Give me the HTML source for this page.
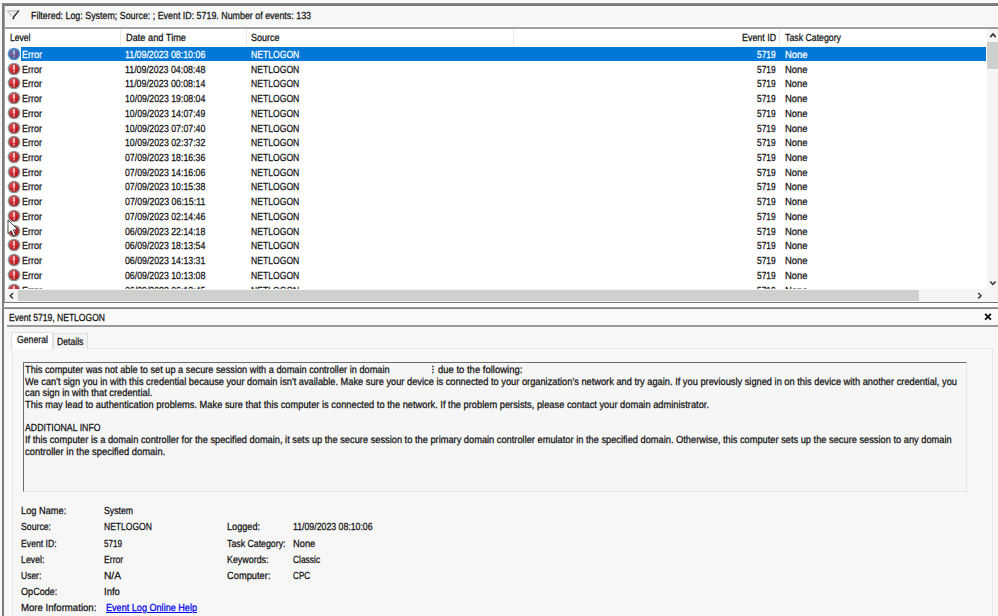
<!DOCTYPE html>
<html>
<head>
<meta charset="utf-8">
<title>Event Viewer</title>
<style>
html,body{margin:0;padding:0;}
body{width:998px;height:616px;overflow:hidden;background:#f7f7f7;font-family:"Liberation Sans",sans-serif;font-size:10.3px;color:#101010;position:relative;}
.abs{position:absolute;}
.t{position:absolute;white-space:nowrap;text-rendering:geometricPrecision;line-height:12px;height:12px;transform-origin:0 0;-webkit-text-stroke:0.25px currentColor;}
.w{color:#fff;}
.lnk{color:#0000f0;text-decoration:underline;}
#clip{position:absolute;left:0;top:0;width:998px;height:289.1px;overflow:hidden;}
</style>
</head>
<body>
<svg width="0" height="0" style="position:absolute"><defs><radialGradient id="gr" cx="0.35" cy="0.3" r="0.8"><stop offset="0" stop-color="#e4484d"/><stop offset="1" stop-color="#ad0c12"/></radialGradient><radialGradient id="gs" cx="0.35" cy="0.3" r="0.8"><stop offset="0" stop-color="#7a6a9c"/><stop offset="1" stop-color="#58467c"/></radialGradient></defs></svg>

<div class="abs" style="left:1.6px;top:3px;width:997px;height:2.8px;background:linear-gradient(#8e8e8e,#6c6c6c)"></div>
<div class="abs" style="left:1.6px;top:3px;width:2.2px;height:306px;background:#7b7b7b"></div>
<div class="abs" style="left:3.8px;top:5.2px;width:0.8px;height:304px;background:#a0a0a0"></div>
<div class="abs" style="left:0;top:0;width:998px;height:3px;background:#fafafa"></div>
<div class="abs" style="left:4.7px;top:5.8px;width:994px;height:21.2px;background:#f7f7f7;border-top:1.4px solid #fff;border-bottom:1.2px solid #fff;box-sizing:border-box"></div>
<div class="abs" style="left:4.5px;top:27px;width:994px;height:1.8px;background:#a0a0a0"></div>
<div class="abs" style="left:5px;top:28.7px;width:982px;height:261px;background:#fff"></div>
<div class="abs" style="left:119.9px;top:29px;width:1px;height:17px;background:#e8e8e8"></div>
<div class="abs" style="left:245.5px;top:29px;width:1px;height:17px;background:#e8e8e8"></div>
<div class="abs" style="left:513.2px;top:29px;width:1px;height:17px;background:#e8e8e8"></div>
<div class="abs" style="left:779.3px;top:29px;width:1px;height:17px;background:#e8e8e8"></div>
<div class="abs" style="left:987px;top:28.7px;width:11px;height:273px;background:#f5f5f5"></div>
<div class="abs" style="left:987px;top:41.8px;width:11px;height:27px;background:#cdd0cc"></div>
<svg class="abs" style="left:987px;top:30px" width="11" height="12" viewBox="0 0 11 12"><path d="M3.3 7.1 L6 4.0 L8.7 7.1" fill="none" stroke="#303030" stroke-width="1.6"/></svg>
<svg class="abs" style="left:987px;top:276.5px" width="11" height="12" viewBox="0 0 11 12"><path d="M3.2 4.5 L5.9 7.4 L8.6 4.5" fill="none" stroke="#303030" stroke-width="1.5"/></svg>
<div id="clip">
<div class="abs" style="left:20.8px;top:46.60px;width:965.6px;height:14.8px;background:#0078d7"></div>
<svg class="abs" style="left:7.35px;top:46.95px" width="14" height="14" viewBox="0 0 14 14"><circle cx="7" cy="7" r="6.35" fill="#4a98dc"/><circle cx="7" cy="7" r="4.85" fill="url(#gs)"/><path d="M6.2 3.2 L7.8 3.2 L7.55 8.2 L6.45 8.2 Z" fill="#a8e0ff"/><rect x="6.35" y="9" width="1.3" height="1.4" rx="0.4" fill="#a8e0ff"/></svg>
<svg class="abs" style="left:7.35px;top:61.68px" width="14" height="14" viewBox="0 0 14 14"><circle cx="7" cy="7" r="6.35" fill="#8f9494"/><circle cx="7" cy="7" r="4.85" fill="url(#gr)"/><path d="M6.2 3.2 L7.8 3.2 L7.55 8.2 L6.45 8.2 Z" fill="#ffffff"/><rect x="6.35" y="9" width="1.3" height="1.4" rx="0.4" fill="#ffffff"/></svg>
<svg class="abs" style="left:7.35px;top:76.41px" width="14" height="14" viewBox="0 0 14 14"><circle cx="7" cy="7" r="6.35" fill="#8f9494"/><circle cx="7" cy="7" r="4.85" fill="url(#gr)"/><path d="M6.2 3.2 L7.8 3.2 L7.55 8.2 L6.45 8.2 Z" fill="#ffffff"/><rect x="6.35" y="9" width="1.3" height="1.4" rx="0.4" fill="#ffffff"/></svg>
<svg class="abs" style="left:7.35px;top:91.14px" width="14" height="14" viewBox="0 0 14 14"><circle cx="7" cy="7" r="6.35" fill="#8f9494"/><circle cx="7" cy="7" r="4.85" fill="url(#gr)"/><path d="M6.2 3.2 L7.8 3.2 L7.55 8.2 L6.45 8.2 Z" fill="#ffffff"/><rect x="6.35" y="9" width="1.3" height="1.4" rx="0.4" fill="#ffffff"/></svg>
<svg class="abs" style="left:7.35px;top:105.87px" width="14" height="14" viewBox="0 0 14 14"><circle cx="7" cy="7" r="6.35" fill="#8f9494"/><circle cx="7" cy="7" r="4.85" fill="url(#gr)"/><path d="M6.2 3.2 L7.8 3.2 L7.55 8.2 L6.45 8.2 Z" fill="#ffffff"/><rect x="6.35" y="9" width="1.3" height="1.4" rx="0.4" fill="#ffffff"/></svg>
<svg class="abs" style="left:7.35px;top:120.60px" width="14" height="14" viewBox="0 0 14 14"><circle cx="7" cy="7" r="6.35" fill="#8f9494"/><circle cx="7" cy="7" r="4.85" fill="url(#gr)"/><path d="M6.2 3.2 L7.8 3.2 L7.55 8.2 L6.45 8.2 Z" fill="#ffffff"/><rect x="6.35" y="9" width="1.3" height="1.4" rx="0.4" fill="#ffffff"/></svg>
<svg class="abs" style="left:7.35px;top:135.33px" width="14" height="14" viewBox="0 0 14 14"><circle cx="7" cy="7" r="6.35" fill="#8f9494"/><circle cx="7" cy="7" r="4.85" fill="url(#gr)"/><path d="M6.2 3.2 L7.8 3.2 L7.55 8.2 L6.45 8.2 Z" fill="#ffffff"/><rect x="6.35" y="9" width="1.3" height="1.4" rx="0.4" fill="#ffffff"/></svg>
<svg class="abs" style="left:7.35px;top:150.06px" width="14" height="14" viewBox="0 0 14 14"><circle cx="7" cy="7" r="6.35" fill="#8f9494"/><circle cx="7" cy="7" r="4.85" fill="url(#gr)"/><path d="M6.2 3.2 L7.8 3.2 L7.55 8.2 L6.45 8.2 Z" fill="#ffffff"/><rect x="6.35" y="9" width="1.3" height="1.4" rx="0.4" fill="#ffffff"/></svg>
<svg class="abs" style="left:7.35px;top:164.79px" width="14" height="14" viewBox="0 0 14 14"><circle cx="7" cy="7" r="6.35" fill="#8f9494"/><circle cx="7" cy="7" r="4.85" fill="url(#gr)"/><path d="M6.2 3.2 L7.8 3.2 L7.55 8.2 L6.45 8.2 Z" fill="#ffffff"/><rect x="6.35" y="9" width="1.3" height="1.4" rx="0.4" fill="#ffffff"/></svg>
<svg class="abs" style="left:7.35px;top:179.52px" width="14" height="14" viewBox="0 0 14 14"><circle cx="7" cy="7" r="6.35" fill="#8f9494"/><circle cx="7" cy="7" r="4.85" fill="url(#gr)"/><path d="M6.2 3.2 L7.8 3.2 L7.55 8.2 L6.45 8.2 Z" fill="#ffffff"/><rect x="6.35" y="9" width="1.3" height="1.4" rx="0.4" fill="#ffffff"/></svg>
<svg class="abs" style="left:7.35px;top:194.25px" width="14" height="14" viewBox="0 0 14 14"><circle cx="7" cy="7" r="6.35" fill="#8f9494"/><circle cx="7" cy="7" r="4.85" fill="url(#gr)"/><path d="M6.2 3.2 L7.8 3.2 L7.55 8.2 L6.45 8.2 Z" fill="#ffffff"/><rect x="6.35" y="9" width="1.3" height="1.4" rx="0.4" fill="#ffffff"/></svg>
<svg class="abs" style="left:7.35px;top:208.98px" width="14" height="14" viewBox="0 0 14 14"><circle cx="7" cy="7" r="6.35" fill="#8f9494"/><circle cx="7" cy="7" r="4.85" fill="url(#gr)"/><path d="M6.2 3.2 L7.8 3.2 L7.55 8.2 L6.45 8.2 Z" fill="#ffffff"/><rect x="6.35" y="9" width="1.3" height="1.4" rx="0.4" fill="#ffffff"/></svg>
<svg class="abs" style="left:7.35px;top:223.71px" width="14" height="14" viewBox="0 0 14 14"><circle cx="7" cy="7" r="6.35" fill="#8f9494"/><circle cx="7" cy="7" r="4.85" fill="url(#gr)"/><path d="M6.2 3.2 L7.8 3.2 L7.55 8.2 L6.45 8.2 Z" fill="#ffffff"/><rect x="6.35" y="9" width="1.3" height="1.4" rx="0.4" fill="#ffffff"/></svg>
<svg class="abs" style="left:7.35px;top:238.44px" width="14" height="14" viewBox="0 0 14 14"><circle cx="7" cy="7" r="6.35" fill="#8f9494"/><circle cx="7" cy="7" r="4.85" fill="url(#gr)"/><path d="M6.2 3.2 L7.8 3.2 L7.55 8.2 L6.45 8.2 Z" fill="#ffffff"/><rect x="6.35" y="9" width="1.3" height="1.4" rx="0.4" fill="#ffffff"/></svg>
<svg class="abs" style="left:7.35px;top:253.17px" width="14" height="14" viewBox="0 0 14 14"><circle cx="7" cy="7" r="6.35" fill="#8f9494"/><circle cx="7" cy="7" r="4.85" fill="url(#gr)"/><path d="M6.2 3.2 L7.8 3.2 L7.55 8.2 L6.45 8.2 Z" fill="#ffffff"/><rect x="6.35" y="9" width="1.3" height="1.4" rx="0.4" fill="#ffffff"/></svg>
<svg class="abs" style="left:7.35px;top:267.90px" width="14" height="14" viewBox="0 0 14 14"><circle cx="7" cy="7" r="6.35" fill="#8f9494"/><circle cx="7" cy="7" r="4.85" fill="url(#gr)"/><path d="M6.2 3.2 L7.8 3.2 L7.55 8.2 L6.45 8.2 Z" fill="#ffffff"/><rect x="6.35" y="9" width="1.3" height="1.4" rx="0.4" fill="#ffffff"/></svg>
<svg class="abs" style="left:7.35px;top:282.63px" width="14" height="14" viewBox="0 0 14 14"><circle cx="7" cy="7" r="6.35" fill="#8f9494"/><circle cx="7" cy="7" r="4.85" fill="url(#gr)"/><path d="M6.2 3.2 L7.8 3.2 L7.55 8.2 L6.45 8.2 Z" fill="#ffffff"/><rect x="6.35" y="9" width="1.3" height="1.4" rx="0.4" fill="#ffffff"/></svg>
<span class="t" style="left:31.30px;top:11px;transform:scaleX(0.8613)">Filtered: Log: System; Source: ; Event ID: 5719. Number of events: 133</span>
<span class="t" style="left:9.80px;top:33px;transform:scaleX(0.8325)">Level</span>
<span class="t" style="left:125.50px;top:33px;transform:scaleX(0.8959)">Date and Time</span>
<span class="t" style="left:251.00px;top:33px;transform:scaleX(0.8731)">Source</span>
<span class="t" style="left:741.80px;top:33px;transform:scaleX(0.8658)">Event ID</span>
<span class="t" style="left:785.00px;top:33px;transform:scaleX(0.8507)">Task Category</span>
<span class="t w" style="left:21.90px;top:50px;transform:scaleX(0.8737)">Error</span>
<span class="t w" style="left:124.90px;top:50px;transform:scaleX(0.8568)">11/09/2023 08:10:06</span>
<span class="t w" style="left:251.00px;top:50px;transform:scaleX(0.8357)">NETLOGON</span>
<span class="t w" style="left:757.40px;top:50px;transform:scaleX(0.8115)">5719</span>
<span class="t w" style="left:785.00px;top:50px;transform:scaleX(0.9178)">None</span>
<span class="t" style="left:21.90px;top:65px;transform:scaleX(0.8737)">Error</span>
<span class="t" style="left:124.90px;top:65px;transform:scaleX(0.8568)">11/09/2023 04:08:48</span>
<span class="t" style="left:251.00px;top:65px;transform:scaleX(0.8357)">NETLOGON</span>
<span class="t" style="left:757.40px;top:65px;transform:scaleX(0.8115)">5719</span>
<span class="t" style="left:785.00px;top:65px;transform:scaleX(0.9178)">None</span>
<span class="t" style="left:21.90px;top:79px;transform:scaleX(0.8737)">Error</span>
<span class="t" style="left:124.90px;top:79px;transform:scaleX(0.8568)">11/09/2023 00:08:14</span>
<span class="t" style="left:251.00px;top:79px;transform:scaleX(0.8357)">NETLOGON</span>
<span class="t" style="left:757.40px;top:79px;transform:scaleX(0.8115)">5719</span>
<span class="t" style="left:785.00px;top:79px;transform:scaleX(0.9178)">None</span>
<span class="t" style="left:21.90px;top:94px;transform:scaleX(0.8737)">Error</span>
<span class="t" style="left:124.90px;top:94px;transform:scaleX(0.8499)">10/09/2023 19:08:04</span>
<span class="t" style="left:251.00px;top:94px;transform:scaleX(0.8357)">NETLOGON</span>
<span class="t" style="left:757.40px;top:94px;transform:scaleX(0.8115)">5719</span>
<span class="t" style="left:785.00px;top:94px;transform:scaleX(0.9178)">None</span>
<span class="t" style="left:21.90px;top:109px;transform:scaleX(0.8737)">Error</span>
<span class="t" style="left:124.90px;top:109px;transform:scaleX(0.8499)">10/09/2023 14:07:49</span>
<span class="t" style="left:251.00px;top:109px;transform:scaleX(0.8357)">NETLOGON</span>
<span class="t" style="left:757.40px;top:109px;transform:scaleX(0.8115)">5719</span>
<span class="t" style="left:785.00px;top:109px;transform:scaleX(0.9178)">None</span>
<span class="t" style="left:21.90px;top:124px;transform:scaleX(0.8737)">Error</span>
<span class="t" style="left:124.90px;top:124px;transform:scaleX(0.8499)">10/09/2023 07:07:40</span>
<span class="t" style="left:251.00px;top:124px;transform:scaleX(0.8357)">NETLOGON</span>
<span class="t" style="left:757.40px;top:124px;transform:scaleX(0.8115)">5719</span>
<span class="t" style="left:785.00px;top:124px;transform:scaleX(0.9178)">None</span>
<span class="t" style="left:21.90px;top:138px;transform:scaleX(0.8737)">Error</span>
<span class="t" style="left:124.90px;top:138px;transform:scaleX(0.8499)">10/09/2023 02:37:32</span>
<span class="t" style="left:251.00px;top:138px;transform:scaleX(0.8357)">NETLOGON</span>
<span class="t" style="left:757.40px;top:138px;transform:scaleX(0.8115)">5719</span>
<span class="t" style="left:785.00px;top:138px;transform:scaleX(0.9178)">None</span>
<span class="t" style="left:21.90px;top:153px;transform:scaleX(0.8737)">Error</span>
<span class="t" style="left:124.90px;top:153px;transform:scaleX(0.8499)">07/09/2023 18:16:36</span>
<span class="t" style="left:251.00px;top:153px;transform:scaleX(0.8357)">NETLOGON</span>
<span class="t" style="left:757.40px;top:153px;transform:scaleX(0.8115)">5719</span>
<span class="t" style="left:785.00px;top:153px;transform:scaleX(0.9178)">None</span>
<span class="t" style="left:21.90px;top:168px;transform:scaleX(0.8737)">Error</span>
<span class="t" style="left:124.90px;top:168px;transform:scaleX(0.8499)">07/09/2023 14:16:06</span>
<span class="t" style="left:251.00px;top:168px;transform:scaleX(0.8357)">NETLOGON</span>
<span class="t" style="left:757.40px;top:168px;transform:scaleX(0.8115)">5719</span>
<span class="t" style="left:785.00px;top:168px;transform:scaleX(0.9178)">None</span>
<span class="t" style="left:21.90px;top:182px;transform:scaleX(0.8737)">Error</span>
<span class="t" style="left:124.90px;top:182px;transform:scaleX(0.8499)">07/09/2023 10:15:38</span>
<span class="t" style="left:251.00px;top:182px;transform:scaleX(0.8357)">NETLOGON</span>
<span class="t" style="left:757.40px;top:182px;transform:scaleX(0.8115)">5719</span>
<span class="t" style="left:785.00px;top:182px;transform:scaleX(0.9178)">None</span>
<span class="t" style="left:21.90px;top:197px;transform:scaleX(0.8737)">Error</span>
<span class="t" style="left:124.90px;top:197px;transform:scaleX(0.8568)">07/09/2023 06:15:11</span>
<span class="t" style="left:251.00px;top:197px;transform:scaleX(0.8357)">NETLOGON</span>
<span class="t" style="left:757.40px;top:197px;transform:scaleX(0.8115)">5719</span>
<span class="t" style="left:785.00px;top:197px;transform:scaleX(0.9178)">None</span>
<span class="t" style="left:21.90px;top:212px;transform:scaleX(0.8737)">Error</span>
<span class="t" style="left:124.90px;top:212px;transform:scaleX(0.8499)">07/09/2023 02:14:46</span>
<span class="t" style="left:251.00px;top:212px;transform:scaleX(0.8357)">NETLOGON</span>
<span class="t" style="left:757.40px;top:212px;transform:scaleX(0.8115)">5719</span>
<span class="t" style="left:785.00px;top:212px;transform:scaleX(0.9178)">None</span>
<span class="t" style="left:21.90px;top:227px;transform:scaleX(0.8737)">Error</span>
<span class="t" style="left:124.90px;top:227px;transform:scaleX(0.8499)">06/09/2023 22:14:18</span>
<span class="t" style="left:251.00px;top:227px;transform:scaleX(0.8357)">NETLOGON</span>
<span class="t" style="left:757.40px;top:227px;transform:scaleX(0.8115)">5719</span>
<span class="t" style="left:785.00px;top:227px;transform:scaleX(0.9178)">None</span>
<span class="t" style="left:21.90px;top:241px;transform:scaleX(0.8737)">Error</span>
<span class="t" style="left:124.90px;top:241px;transform:scaleX(0.8499)">06/09/2023 18:13:54</span>
<span class="t" style="left:251.00px;top:241px;transform:scaleX(0.8357)">NETLOGON</span>
<span class="t" style="left:757.40px;top:241px;transform:scaleX(0.8115)">5719</span>
<span class="t" style="left:785.00px;top:241px;transform:scaleX(0.9178)">None</span>
<span class="t" style="left:21.90px;top:256px;transform:scaleX(0.8737)">Error</span>
<span class="t" style="left:124.90px;top:256px;transform:scaleX(0.8499)">06/09/2023 14:13:31</span>
<span class="t" style="left:251.00px;top:256px;transform:scaleX(0.8357)">NETLOGON</span>
<span class="t" style="left:757.40px;top:256px;transform:scaleX(0.8115)">5719</span>
<span class="t" style="left:785.00px;top:256px;transform:scaleX(0.9178)">None</span>
<span class="t" style="left:21.90px;top:271px;transform:scaleX(0.8737)">Error</span>
<span class="t" style="left:124.90px;top:271px;transform:scaleX(0.8499)">06/09/2023 10:13:08</span>
<span class="t" style="left:251.00px;top:271px;transform:scaleX(0.8357)">NETLOGON</span>
<span class="t" style="left:757.40px;top:271px;transform:scaleX(0.8115)">5719</span>
<span class="t" style="left:785.00px;top:271px;transform:scaleX(0.9178)">None</span>
<span class="t" style="left:21.90px;top:286px;transform:scaleX(0.8737)">Error</span>
<span class="t" style="left:124.90px;top:286px;transform:scaleX(0.8499)">06/09/2023 06:12:45</span>
<span class="t" style="left:251.00px;top:286px;transform:scaleX(0.8357)">NETLOGON</span>
<span class="t" style="left:757.40px;top:286px;transform:scaleX(0.8115)">5719</span>
<span class="t" style="left:785.00px;top:286px;transform:scaleX(0.9178)">None</span>
</div>
<div class="abs" style="left:5px;top:289.1px;width:982px;height:12.6px;background:#f5f5f5"></div>
<div class="abs" style="left:18px;top:289.8px;width:900.8px;height:11.6px;background:#cdd0cc"></div>
<svg class="abs" style="left:5px;top:289.6px" width="13" height="12" viewBox="0 0 13 12"><path d="M8.1 3.1 L5.2 5.8 L8.1 8.5" fill="none" stroke="#333" stroke-width="1.4"/></svg>
<svg class="abs" style="left:972.9px;top:289.6px" width="13" height="12" viewBox="0 0 13 12"><path d="M5.2 3.1 L8.1 5.8 L5.2 8.5" fill="none" stroke="#333" stroke-width="1.4"/></svg>
<div class="abs" style="left:1.8px;top:301.8px;width:997px;height:1.1px;background:#787878"></div>
<div class="abs" style="left:4.4px;top:302.9px;width:994px;height:4.6px;background:#fcfcfc"></div>
<div class="abs" style="left:2.2px;top:307.4px;width:996px;height:1.7px;background:linear-gradient(#acacac,#767676)"></div>
<div class="abs" style="left:2.2px;top:307.7px;width:2.3px;height:309px;background:#7b7b7b"></div>
<div class="abs" style="left:4.5px;top:309.1px;width:994px;height:16.1px;background:#f9f9f9"></div>
<div class="abs" style="left:7px;top:325.2px;width:991px;height:1.6px;background:#9a9a9a"></div>
<svg class="abs" style="left:983px;top:312px" width="10" height="10" viewBox="0 0 10 10"><path d="M2.1 1.9 L7.9 7.7 M7.9 1.9 L2.1 7.7" fill="none" stroke="#111" stroke-width="1.9"/></svg>
<div class="abs" style="left:12.2px;top:348.4px;width:980.6px;height:280px;background:#f7f7f7;border:1px solid #e9e9e9;box-sizing:border-box"></div>
<div class="abs" style="left:53px;top:333.4px;width:34.6px;height:15.4px;background:#f4f4f4;border:1px solid #dedede;border-bottom:none;box-sizing:border-box"></div>
<div class="abs" style="left:10.5px;top:331.5px;width:42.8px;height:18px;background:#fefefe;border:1px solid #e2e2e2;border-bottom:none;box-sizing:border-box"></div>
<div class="abs" style="left:22.8px;top:362.1px;width:943.8px;height:130px;background:#f6f6f6;border-top:1.2px solid #6c6c6c;border-left:1.2px solid #6c6c6c;border-right:1px solid #e6e6e6;border-bottom:1px solid #e6e6e6;box-sizing:border-box"></div>
<svg class="abs" style="left:6px;top:9px" width="15" height="12" viewBox="0 0 15 12"><path d="M1.3 1.9 L12.8 1.7 L7.6 8 L6.6 8 Z" fill="#ececec" stroke="#b2b2b2" stroke-width="1"/><path d="M12.9 1.7 L7.7 7.9 L7.7 9.6 L6.5 9.6" fill="none" stroke="#1a1a1a" stroke-width="1.2" stroke-linejoin="round"/></svg>
<span class="t" style="left:9.00px;top:313px;transform:scaleX(0.8304)">Event 5719, NETLOGON</span>
<span class="t" style="left:16.80px;top:335px;transform:scaleX(0.8461)">General</span>
<span class="t" style="left:57.10px;top:337px;transform:scaleX(0.8385)">Details</span>
<span class="t" style="left:25.00px;top:365px;transform:scaleX(0.8947)">This computer was not able to set up a secure session with a domain controller in domain</span>
<span class="t" style="left:431.50px;top:365px;transform:scaleX(1.0000)">⁝</span>
<span class="t" style="left:437.80px;top:365px;transform:scaleX(0.9204)">due to the following:</span>
<span class="t" style="left:25.00px;top:377px;transform:scaleX(0.9001)">We can&#x27;t sign you in with this credential because your domain isn&#x27;t available. Make sure your device is connected to your organization&#x27;s network and try again. If you previously signed in on this device with another credential, you</span>
<span class="t" style="left:25.00px;top:388px;transform:scaleX(0.9040)">can sign in with that credential.</span>
<span class="t" style="left:25.00px;top:400px;transform:scaleX(0.9026)">This may lead to authentication problems. Make sure that this computer is connected to the network. If the problem persists, please contact your domain administrator.</span>
<span class="t" style="left:25.00px;top:423px;transform:scaleX(0.8506)">ADDITIONAL INFO</span>
<span class="t" style="left:25.00px;top:435px;transform:scaleX(0.9000)">If this computer is a domain controller for the specified domain, it sets up the secure session to the primary domain controller emulator in the specified domain. Otherwise, this computer sets up the secure session to any domain</span>
<span class="t" style="left:25.00px;top:447px;transform:scaleX(0.9146)">controller in the specified domain.</span>
<span class="t" style="left:20.50px;top:506px;transform:scaleX(0.8973)">Log Name:</span>
<span class="t" style="left:20.50px;top:522px;transform:scaleX(0.8451)">Source:</span>
<span class="t" style="left:20.50px;top:539px;transform:scaleX(0.8428)">Event ID:</span>
<span class="t" style="left:20.50px;top:555px;transform:scaleX(0.8550)">Level:</span>
<span class="t" style="left:20.50px;top:571px;transform:scaleX(0.8249)">User:</span>
<span class="t" style="left:20.50px;top:587px;transform:scaleX(0.8831)">OpCode:</span>
<span class="t" style="left:20.50px;top:603px;transform:scaleX(0.9343)">More Information:</span>
<span class="t" style="left:103.80px;top:506px;transform:scaleX(0.8473)">System</span>
<span class="t" style="left:103.80px;top:522px;transform:scaleX(0.8288)">NETLOGON</span>
<span class="t" style="left:103.80px;top:539px;transform:scaleX(0.7896)">5719</span>
<span class="t" style="left:103.80px;top:555px;transform:scaleX(0.8388)">Error</span>
<span class="t" style="left:103.80px;top:571px;transform:scaleX(0.9900)">N/A</span>
<span class="t" style="left:103.80px;top:587px;transform:scaleX(0.9251)">Info</span>
<span class="t lnk" style="left:106.30px;top:603px;transform:scaleX(0.8831)">Event Log Online Help</span>
<span class="t" style="left:226.50px;top:522px;transform:scaleX(0.8890)">Logged:</span>
<span class="t" style="left:226.50px;top:539px;transform:scaleX(0.8517)">Task Category:</span>
<span class="t" style="left:226.50px;top:555px;transform:scaleX(0.8632)">Keywords:</span>
<span class="t" style="left:226.50px;top:571px;transform:scaleX(0.9048)">Computer:</span>
<span class="t" style="left:293.10px;top:522px;transform:scaleX(0.8493)">11/09/2023 08:10:06</span>
<span class="t" style="left:293.10px;top:539px;transform:scaleX(0.9056)">None</span>
<span class="t" style="left:293.10px;top:555px;transform:scaleX(0.8166)">Classic</span>
<span class="t" style="left:293.10px;top:571px;transform:scaleX(0.7908)">CPC</span>
<svg class="abs" style="left:7px;top:219px" width="13" height="19" viewBox="0 0 13 19"><path d="M1 1 L1 14.6 L4.2 11.7 L6.6 17 L8.7 16 L6.3 10.9 L10.6 10.6 Z" fill="#fff" stroke="#222" stroke-width="0.8"/></svg>
</body>
</html>
